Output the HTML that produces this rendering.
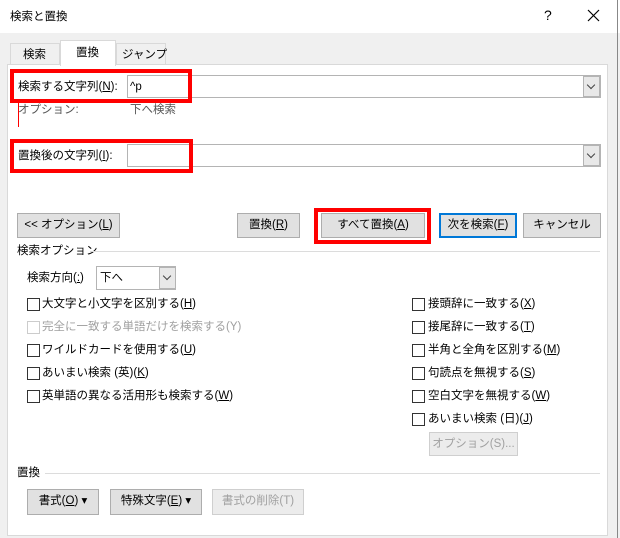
<!DOCTYPE html>
<html><head><meta charset="utf-8"><style>
*{box-sizing:border-box;margin:0;padding:0}
body{width:620px;height:538px;background:#f0f0f0;font-family:"Liberation Sans","Noto Sans CJK JP",sans-serif;font-size:11.5px;color:#000;position:relative;overflow:hidden}
.a{position:absolute;white-space:nowrap}
.t{line-height:16px}
.btn{position:absolute;background:#e1e1e1;border:1px solid #adadad;text-align:center;line-height:22px}
.dis{color:#a0a0a0;border-color:#cfcfcf;background:#ececec}
.cb{position:absolute;width:13px;height:13px;border:1px solid #333;background:#fff}
.inp{position:absolute;background:#fff;border:1px solid #b4b4b4}
.dd{position:absolute;background:#e8e8e8;border:1px solid #b4b4b4;width:17px}
.dd:after{content:"";position:absolute;left:4px;top:5px;width:5px;height:5px;border-right:1px solid #444;border-bottom:1px solid #444;transform:rotate(45deg)}
.red{position:absolute;border:4px solid #f00}
u{text-decoration:underline}
</style></head><body>
<div class="a" style="left:0;top:0;width:620px;height:33px;background:#fff"></div>
<div class="a" style="right:2px;top:0;width:1px;height:538px;background:#888"></div>
<div class="a t" style="left:10px;top:9px">検索と置換</div>
<div class="a" style="left:544px;top:7px;font-size:14px">?</div>
<svg class="a" style="left:587px;top:9px" width="13" height="13"><path d="M1 1L12 12M12 1L1 12" stroke="#000" stroke-width="1.2"/></svg>

<div class="a" style="left:10px;top:43px;width:50px;height:22px;border:1px solid #d9d9d9;border-bottom:none;background:#f0f0f0"></div>
<div class="a t" style="left:23px;top:47px">検索</div>
<div class="a" style="left:60px;top:40px;width:56px;height:26px;border:1px solid #d9d9d9;border-bottom:none;background:#fff;z-index:2"></div>
<div class="a t" style="left:76px;top:45px;z-index:3">置換</div>
<div class="a" style="left:116px;top:43px;width:50px;height:22px;border:1px solid #d9d9d9;border-bottom:none;background:#f0f0f0"></div>
<div class="a t" style="left:122px;top:47px">ジャンプ</div>

<div class="a" style="left:7px;top:64px;width:601px;height:472px;background:#fff;border:1px solid #d9d9d9"></div>

<div class="inp" style="left:127px;top:75px;width:474px;height:23px"></div>
<div class="dd" style="left:583px;top:76px;height:21px"></div>
<div class="a t" style="left:18px;top:79px">検索する文字列(<u>N</u>):</div>
<div class="a t" style="left:130px;top:79px">^p</div>
<div class="red" style="left:10px;top:69px;width:182px;height:34px"></div>
<div class="a" style="left:18px;top:100px;width:1px;height:27px;background:#f00"></div>
<div class="a t" style="left:18px;top:102px;color:#555">オプション:</div>
<div class="a t" style="left:130px;top:102px;color:#555">下へ検索</div>

<div class="inp" style="left:127px;top:144px;width:474px;height:23px"></div>
<div class="dd" style="left:583px;top:145px;height:21px"></div>
<div class="a t" style="left:18px;top:148px">置換後の文字列(<u>I</u>):</div>
<div class="red" style="left:10px;top:139px;width:183px;height:34px"></div>

<div class="btn" style="left:17px;top:213px;width:103px;height:25px">&lt;&lt; オプション(<u>L</u>)</div>
<div class="btn" style="left:237px;top:213px;width:63px;height:25px">置換(<u>R</u>)</div>
<div class="btn" style="left:321px;top:213px;width:104px;height:25px">すべて置換(<u>A</u>)</div>
<div class="red" style="left:314px;top:208px;width:117px;height:36px"></div>
<div class="btn" style="left:439px;top:213px;width:78px;height:25px;border:2px solid #0078d7;line-height:21px">次を検索(<u>F</u>)</div>
<div class="btn" style="left:523px;top:213px;width:78px;height:25px">キャンセル</div>

<div class="a t" style="left:17px;top:243px">検索オプション</div>
<div class="a" style="left:90px;top:251px;width:510px;height:1px;background:#dcdcdc"></div>
<div class="a t" style="left:27px;top:270px">検索方向(<u>:</u>)</div>
<div class="inp" style="left:96px;top:266px;width:80px;height:24px"></div>
<div class="a t" style="left:100px;top:270px">下へ</div>
<div class="dd" style="left:159px;top:267px;height:22px"></div>

<div class="cb" style="left:27px;top:298px"></div><div class="a t" style="left:42px;top:296px">大文字と小文字を区別する(<u>H</u>)</div>
<div class="cb" style="left:27px;top:321px;border-color:#ccc"></div><div class="a t" style="left:42px;top:319px;color:#a0a0a0">完全に一致する単語だけを検索する(Y)</div>
<div class="cb" style="left:27px;top:344px"></div><div class="a t" style="left:42px;top:342px">ワイルドカードを使用する(<u>U</u>)</div>
<div class="cb" style="left:27px;top:367px"></div><div class="a t" style="left:42px;top:365px">あいまい検索 (英)(<u>K</u>)</div>
<div class="cb" style="left:27px;top:390px"></div><div class="a t" style="left:42px;top:388px">英単語の異なる活用形も検索する(<u>W</u>)</div>

<div class="cb" style="left:412px;top:298px"></div><div class="a t" style="left:428px;top:296px">接頭辞に一致する(<u>X</u>)</div>
<div class="cb" style="left:412px;top:321px"></div><div class="a t" style="left:428px;top:319px">接尾辞に一致する(<u>T</u>)</div>
<div class="cb" style="left:412px;top:344px"></div><div class="a t" style="left:428px;top:342px">半角と全角を区別する(<u>M</u>)</div>
<div class="cb" style="left:412px;top:367px"></div><div class="a t" style="left:428px;top:365px">句読点を無視する(<u>S</u>)</div>
<div class="cb" style="left:412px;top:390px"></div><div class="a t" style="left:428px;top:388px">空白文字を無視する(<u>W</u>)</div>
<div class="cb" style="left:412px;top:413px"></div><div class="a t" style="left:428px;top:411px">あいまい検索 (日)(<u>J</u>)</div>
<div class="btn dis" style="left:429px;top:432px;width:89px;height:24px">オプション(S)...</div>

<div class="a t" style="left:17px;top:465px">置換</div>
<div class="a" style="left:45px;top:473px;width:555px;height:1px;background:#dcdcdc"></div>
<div class="btn" style="left:27px;top:489px;width:72px;height:26px">書式(<u>O</u>) ▾</div>
<div class="btn" style="left:110px;top:489px;width:92px;height:26px">特殊文字(<u>E</u>) ▾</div>
<div class="btn dis" style="left:212px;top:489px;width:92px;height:26px">書式の削除(T)</div>
</body></html>
